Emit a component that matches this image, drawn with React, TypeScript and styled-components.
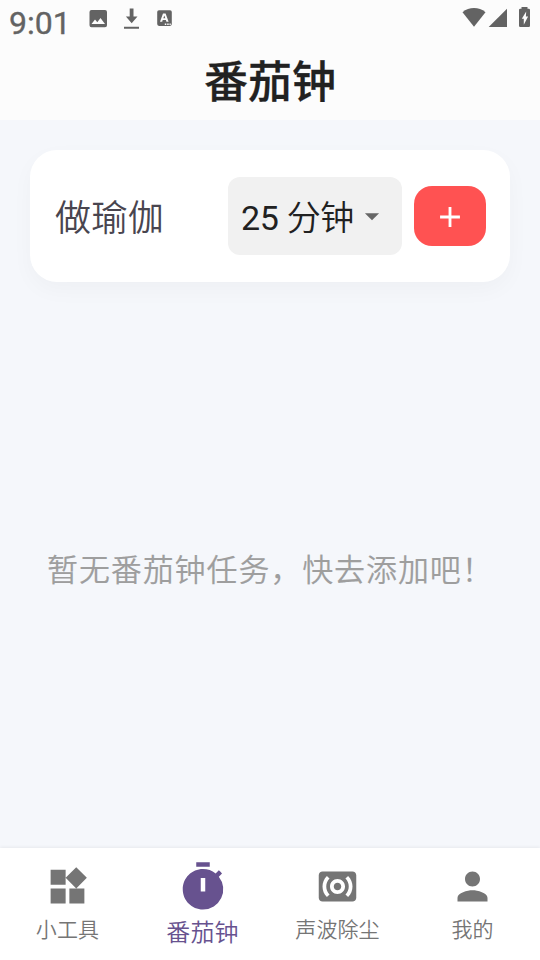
import React from "react";
import styled, { createGlobalStyle } from "styled-components";

const GlobalStyle = createGlobalStyle`
  * { box-sizing: border-box; }
  body {
    margin: 0;
    background: #f5f7fb;
    font-family: Roboto, "Noto Sans CJK SC", sans-serif;
  }
  button { font: inherit; border: 0; padding: 0; background: none; }
`;

const Screen = styled.div`
  width: 540px;
  height: 960px;
  display: flex;
  flex-direction: column;
  overflow: hidden;
  background: #f5f7fb;
`;

const Header = styled.header`
  height: 120px;
  flex: none;
  background: #fcfcfc;
`;

const StatusBar = styled.div`
  height: 45px;
  display: flex;
  align-items: flex-start;
  justify-content: space-between;
  color: #636363;
`;

const StatusLeft = styled.div`
  display: flex;
  padding-left: 9px;
`;

const Clock = styled.span`
  width: 78px;
  padding-top: 4px;
  font-size: 32px;
  line-height: 38px;
  font-weight: 400;
  -webkit-text-stroke: 0.35px currentColor;
`;

const StatusIcons = styled.svg`
  display: block;
  fill: currentColor;
`;

const Title = styled.h1`
  margin: 0;
  height: 76px;
  text-align: center;
  font-size: 44px;
  line-height: 76px;
  font-weight: 500;
  color: #212121;
  -webkit-text-stroke: 0.3px currentColor;
`;

const Content = styled.main`
  flex: 1;
  display: flex;
  flex-direction: column;
  padding: 30px 30px 0;
`;

const Card = styled.section`
  height: 132px;
  flex: none;
  display: flex;
  align-items: center;
  padding: 0 24px;
  border-radius: 27px;
  background: #fff;
  box-shadow: 0 8px 22px rgba(0, 0, 0, 0.03);
`;

const TaskName = styled.div`
  flex: 1;
  padding: 5px 0 0 1px;
  font-size: 36px;
  line-height: 54px;
  font-weight: 350;
  letter-spacing: 0.4px;
  color: #49454f;
`;

const Duration = styled.button`
  width: 174px;
  height: 78px;
  display: flex;
  align-items: center;
  padding-left: 12px;
  border-radius: 12px;
  background: #f1f1f1;
  color: #212121;
  font-size: 34px;
  line-height: 50px;
  white-space: nowrap;
`;

const DurationLabel = styled.span`
  width: 115px;
  padding-top: 4px;
  letter-spacing: -0.3px;
`;

const Unit = styled.span`
  font-weight: 350;
`;

const Icon = styled.svg<{ $size: number }>`
  display: block;
  flex: none;
  width: ${(p) => p.$size}px;
  height: ${(p) => p.$size}px;
  fill: currentColor;
  fill-rule: evenodd;
`;

const Caret = styled(Icon)`
  color: #666;
`;

const AddButton = styled.button`
  width: 72px;
  height: 60px;
  margin-left: 12px;
  display: grid;
  place-items: center;
  border-radius: 18px;
  background: #ff5252;
  color: #fff;
`;

const AddIcon = styled(Icon)`
  margin-top: 1px;
`;

const EmptyText = styled.p`
  margin: 264px 0 0;
  padding-left: 17px;
  font-size: 31px;
  line-height: 50px;
  font-weight: 350;
  letter-spacing: 0.9px;
  white-space: nowrap;
  color: #9e9e9e;
  -webkit-text-stroke: 0.15px currentColor;
`;

const NavBar = styled.nav`
  height: 112px;
  flex: none;
  display: grid;
  grid-template-columns: repeat(4, 1fr);
  background: #fff;
  box-shadow: 0 -1px 3px rgba(0, 0, 0, 0.06);
`;

const NavItem = styled.button<{ $active?: boolean }>`
  display: flex;
  flex-direction: column;
  align-items: center;
  padding-top: ${(p) => (p.$active ? 12 : 16)}px;
  color: ${(p) => (p.$active ? "#67528f" : "#757575")};
`;

const NavLabel = styled.span<{ $active?: boolean }>`
  margin-top: ${(p) => (p.$active ? 1 : 5)}px;
  font-size: ${(p) => (p.$active ? 24 : 21)}px;
  line-height: ${(p) => (p.$active ? 36 : 32)}px;
  font-weight: 350;
  letter-spacing: 0.1px;
  white-space: nowrap;
`;

const tabs = [
  {
    label: "小工具",
    path: "M13 13v8h8v-8h-8zM3 21h8v-8H3v8zM3 3v8h8V3H3zm13.66-1.31L11 7.34 16.66 13l5.66-5.66-5.66-5.65z",
  },
  {
    label: "番茄钟",
    active: true,
    path: "M9 1h6v2H9V1zm10.03 6.39l1.42-1.42c-.43-.51-.9-.99-1.41-1.41l-1.42 1.42A8.962 8.962 0 0 0 12 4c-4.97 0-9 4.03-9 9s4.02 9 9 9a8.994 8.994 0 0 0 7.03-14.61zM13 14h-2V8h2v6z",
  },
  {
    label: "声波除尘",
    path: "M20 4H4c-1.1 0-2 .9-2 2v12c0 1.1.9 2 2 2h16c1.1 0 2-.9 2-2V6c0-1.1-.9-2-2-2zM7.76 16.24l-1.41 1.41C4.78 16.1 4 14.05 4 12c0-2.05.78-4.1 2.34-5.66l1.41 1.41C6.59 8.93 6 10.46 6 12s.59 3.07 1.76 4.24zM12 16c-2.21 0-4-1.79-4-4s1.79-4 4-4 4 1.79 4 4-1.79 4-4 4zm5.66 1.66l-1.41-1.41C17.41 15.07 18 13.54 18 12s-.59-3.07-1.76-4.24l1.41-1.41C19.22 7.9 20 9.95 20 12c0 2.05-.78 4.1-2.34 5.66zM12 10c-1.1 0-2 .9-2 2s.9 2 2 2 2-.9 2-2-.9-2-2-2z",
  },
  {
    label: "我的",
    path: "M12 12c2.21 0 4-1.79 4-4s-1.79-4-4-4-4 1.79-4 4 1.79 4 4 4zm0 2c-2.67 0-8 1.34-8 4v2h16v-2c0-2.66-5.33-4-8-4z",
  },
];

export default function App() {
  return (
    <>
      <GlobalStyle />
      <Screen>
        <Header>
          <StatusBar>
            <StatusLeft>
              <Clock>9:01</Clock>
              <StatusIcons width="90" height="40" viewBox="87 0 90 40">
                <path
                  fillRule="evenodd"
                  d="M91.500 10h13.500a2 2 0 0 1 2 2v13.300a2 2 0 0 1-2 2H91.500a2 2 0 0 1-2-2V12a2 2 0 0 1 2-2zM91.500 24h13.500l-4.500-6-3.200 4.200-2.300-2.700z"
                />
                <path d="M129.700 8.500h3.800v8h4l-5.800 6.800-5.800-6.800h3.800zM124 26.700h15v2h-15z" />
                <path
                  fillRule="evenodd"
                  d="M159 10.300h11a1.800 1.800 0 0 1 1.800 1.800v12a1.800 1.800 0 0 1-1.800 1.800h-11a1.800 1.800 0 0 1-1.800-1.800v-12a1.800 1.800 0 0 1 1.800-1.800zM163 13.500l-3 8.200h2.200l.5-1.600h3.200l.5 1.600h2.200l-3-8.200zM163.300 18.300l1-2.900 1 2.900zM164.800 23.400h1.500v1.500h-1.500zM167.200 23.400h1.500v1.500h-1.500zM169.500 23.400h1.300v1.500h-1.300z"
                />
              </StatusIcons>
            </StatusLeft>
            <StatusIcons width="80" height="40" viewBox="460 0 80 40">
              <path d="M462.500 12.300C469 6.700 479 6.700 485.500 12.300L474 26.700z" />
              <path d="M507 8.700V27h-18.300z" />
              <path
                fillRule="evenodd"
                d="M521.500 7h6v1.700h1.300a1.200 1.200 0 0 1 1.200 1.200v15.900a1.200 1.200 0 0 1-1.200 1.200h-8.600a1.200 1.200 0 0 1-1.200-1.200V9.900a1.200 1.200 0 0 1 1.200-1.200h1.300zM526.200 11.500l-4.400 7.200h2v6l4.300-8.200h-2.200z"
              />
            </StatusIcons>
          </StatusBar>
          <Title>番茄钟</Title>
        </Header>
        <Content>
          <Card>
            <TaskName>做瑜伽</TaskName>
            <Duration>
              <DurationLabel>
                25 <Unit>分钟</Unit>
              </DurationLabel>
              <Caret $size={34} viewBox="0 0 24 24">
                <path d="M7 10l5 5 5-5z" />
              </Caret>
            </Duration>
            <AddButton aria-label="添加">
              <AddIcon $size={34} viewBox="0 0 24 24">
                <path d="M19 13h-6v6h-2v-6H5v-2h6V5h2v6h6v2z" />
              </AddIcon>
            </AddButton>
          </Card>
          <EmptyText>暂无番茄钟任务，快去添加吧！</EmptyText>
        </Content>
        <NavBar>
          {tabs.map((tab) => (
            <NavItem key={tab.label} $active={tab.active}>
              <Icon $size={tab.active ? 54 : 45} viewBox="0 0 24 24">
                <path d={tab.path} />
              </Icon>
              <NavLabel $active={tab.active}>{tab.label}</NavLabel>
            </NavItem>
          ))}
        </NavBar>
      </Screen>
    </>
  );
}
